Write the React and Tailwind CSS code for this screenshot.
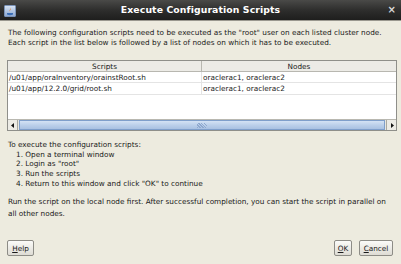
export default function App() {
  const font = { fontFamily: '"DejaVu Sans", sans-serif' };
  return (
    <div className="w-[401px] h-[264px] overflow-hidden bg-[#edebdf] flex flex-col text-[#1a1a1a]" style={font}>
      {/* Title bar */}
      <div className="h-[21px] shrink-0 relative flex items-center justify-center bg-gradient-to-b from-[#4a4a48] via-[#2e2e2d] to-[#1e1e1d] border-b border-[#9a988f]">
        <div className="absolute left-[4px] top-[5px] w-[12px] h-[12px] rounded-[1px] bg-gradient-to-b from-[#d7e3f3] to-[#8fa9d1] border border-[#7b93b8] flex items-center justify-center">
          <svg width="8" height="9" viewBox="0 0 8 9">
            <path d="M4 0 C5.5 2 2.5 3 4 5 C3 3.5 6 3 4 0Z" fill="#e87a1a" />
            <path d="M1 6 H7 V7.5 Q4 9 1 7.5Z" fill="#3a6db5" />
          </svg>
        </div>
        <span className="text-white font-bold text-[9.3px] tracking-[0.1px]">Execute Configuration Scripts</span>
        <span className="absolute right-[5px] top-[3px] text-[#d9d9d9] text-[10px] font-bold leading-[14px]">×</span>
      </div>

      <div className="flex flex-col px-[7px] pt-[7px] text-[7.3px] leading-[9.6px]">
        <p className="pl-[1px]">The following configuration scripts need to be executed as the "root" user on each listed cluster node.</p>
        <p className="pl-[1px]">Each script in the list below is followed by a list of nodes on which it has to be executed.</p>

        {/* Table */}
        <div className="mt-[13px] w-[390px] h-[71px] border border-[#8f8f8a] bg-white flex flex-col">
          <div className="h-[11px] flex bg-[#ecebe6] border-b border-[#b8b7b0]">
            <div className="w-[194px] border-r border-[#b8b7b0] flex items-center justify-center leading-none">Scripts</div>
            <div className="flex-1 flex items-center justify-center leading-none">Nodes</div>
          </div>
          <div className="h-[11px] flex border-b border-[#e4e4e4]">
            <div className="w-[194px] border-r border-[#e4e4e4] pl-[1px] flex items-center leading-none">/u01/app/oraInventory/orainstRoot.sh</div>
            <div className="flex-1 pl-[1px] flex items-center leading-none">oraclerac1, oraclerac2</div>
          </div>
          <div className="h-[12px] flex border-b border-[#e4e4e4]">
            <div className="w-[194px] border-r border-[#e4e4e4] pl-[1px] flex items-center leading-none">/u01/app/12.2.0/grid/root.sh</div>
            <div className="flex-1 pl-[1px] flex items-center leading-none">oraclerac1, oraclerac2</div>
          </div>
          <div className="flex-1"></div>
          {/* scrollbar */}
          <div className="h-[11px] flex bg-[#e7e6e0] border-t border-[#b9b8b0]">
            <div className="w-[10px] flex items-center justify-center border-r border-[#a9a8a0] bg-[#ecebe5]">
              <svg width="4" height="5" viewBox="0 0 4 5"><path d="M0 2.5 L3 0 V5Z" fill="#111" /></svg>
            </div>
            <div className="flex-1 mx-[1px] bg-gradient-to-b from-[#d4e2f4] via-[#bcd0ea] to-[#a9c1e2] border border-[#7f9fcb] flex items-center justify-center">
              <div className="w-[10px] h-[5px] bg-[repeating-linear-gradient(45deg,#8fa9cf_0px,#8fa9cf_1px,transparent_1px,transparent_2px)]"></div>
            </div>
            <div className="w-[10px] flex items-center justify-center border-l border-[#a9a8a0] bg-[#ecebe5]">
              <svg width="4" height="5" viewBox="0 0 4 5"><path d="M4 2.5 L1 0 V5Z" fill="#111" /></svg>
            </div>
          </div>
        </div>

        <div className="mt-[9px] pl-[1px]">
          <p>To execute the configuration scripts:</p>
          <p className="pl-[8px]">1. Open a terminal window</p>
          <p className="pl-[8px]">2. Login as "root"</p>
          <p className="pl-[8px]">3. Run the scripts</p>
          <p className="pl-[8px]">4. Return to this window and click "OK" to continue</p>
        </div>

        <div className="mt-[8px] pl-[1px] leading-[12px]">
          <p>Run the script on the local node first. After successful completion, you can start the script in parallel on</p>
          <p>all other nodes.</p>
        </div>

        <div className="mt-[20px] flex items-center">
          <button className="w-[27px] h-[16px] rounded-[2px] border border-[#8d8c86] bg-gradient-to-b from-[#fbfbf9] to-[#dedcd4] text-[7.3px] leading-none flex items-center justify-center"><span className="underline">H</span>elp</button>
          <div className="flex-1"></div>
          <button className="w-[18px] h-[16px] rounded-[2px] border border-[#8d8c86] bg-gradient-to-b from-[#fbfbf9] to-[#dedcd4] text-[7.3px] leading-none flex items-center justify-center"><span className="underline">O</span>K</button>
          <button className="ml-[7px] w-[34px] h-[16px] rounded-[2px] border border-[#8d8c86] bg-gradient-to-b from-[#fbfbf9] to-[#dedcd4] text-[7.3px] leading-none flex items-center justify-center mr-[1px]"><span className="underline">C</span>ancel</button>
        </div>
      </div>
    </div>
  );
}
